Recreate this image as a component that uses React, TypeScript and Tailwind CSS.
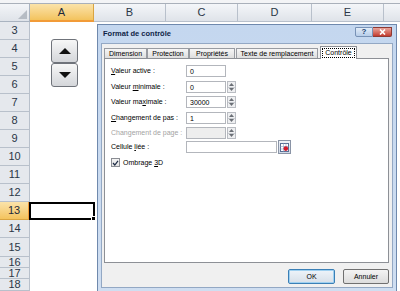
import React from 'react';

const cols = [
  { name: 'A', w: 64, active: true },
  { name: 'B', w: 72 },
  { name: 'C', w: 72 },
  { name: 'D', w: 74 },
  { name: 'E', w: 72 },
  { name: '', w: 20 },
];

const rows = [
  { n: 3, h: 18 },
  { n: 4, h: 18 },
  { n: 5, h: 18 },
  { n: 6, h: 18 },
  { n: 7, h: 18 },
  { n: 8, h: 18 },
  { n: 9, h: 18 },
  { n: 10, h: 18 },
  { n: 11, h: 18 },
  { n: 12, h: 18 },
  { n: 13, h: 18, active: true },
  { n: 14, h: 18 },
  { n: 15, h: 19 },
  { n: 16, h: 11 },
  { n: 17, h: 11 },
  { n: 18, h: 12 },
];

function Spin() {
  return (
    <div className="ml-px flex h-[12px] w-[9px] flex-col border border-[#b9bcc2] bg-[#eeeff1]">
      <div className="flex flex-1 items-center justify-center border-b border-[#c9ccd1]">
        <svg width="5" height="3" viewBox="0 0 5 3">
          <path d="M0 3 L2.5 0 L5 3 Z" fill="#6b6f76" />
        </svg>
      </div>
      <div className="flex flex-1 items-center justify-center">
        <svg width="5" height="3" viewBox="0 0 5 3">
          <path d="M0 0 L2.5 3 L5 0 Z" fill="#6b6f76" />
        </svg>
      </div>
    </div>
  );
}

function Field({
  label,
  value,
  spin,
  disabled,
  h,
}: {
  label: React.ReactNode;
  value?: string;
  spin?: boolean;
  disabled?: boolean;
  h: string;
}) {
  return (
    <div className={`flex items-start ${h}`}>
      <div
        className={`w-[75px] pt-[2px] leading-[8px] ${disabled ? 'text-[#a3a3a3]' : 'text-black'}`}
      >
        {label}
      </div>
      <div
        className={`flex h-[12px] w-[40px] items-center border border-[#b3b6bc] pl-[3px] leading-none ${
          disabled ? 'bg-[#eeeeee]' : 'bg-white'
        }`}
      >
        {value}
      </div>
      {spin && <Spin />}
    </div>
  );
}

function Tab({ label, w, active }: { label: string; w: string; active?: boolean }) {
  if (active) {
    return (
      <div
        className={`relative z-10 -mb-px flex h-[13px] ${w} items-center justify-center border border-b-0 border-[#8d9096] bg-white`}
      >
        <span className="border border-dotted border-black px-[2px] leading-[8px]">{label}</span>
      </div>
    );
  }
  return (
    <div
      className={`flex h-[10px] ${w} items-center justify-center border border-b-0 border-[#989ba1] bg-gradient-to-b from-[#f6f6f6] to-[#dedede] leading-none`}
    >
      {label}
    </div>
  );
}

export default function App() {
  return (
    <div className="relative h-[291px] w-[400px] overflow-hidden bg-white font-['Liberation_Sans',Arial,sans-serif]">
      {/* formula bar edge */}
      <div className="h-[4px] border-b border-[#a9b0ba] bg-[#f3f4f6]" />

      {/* column headers */}
      <div className="flex h-[18px]">
        <div className="relative w-[30px] shrink-0 border-r border-b border-[#a9b3c0] bg-gradient-to-b from-[#f3f5f8] to-[#dfe3e9]">
          <svg className="absolute right-[2px] bottom-[2px]" width="9" height="9" viewBox="0 0 9 9">
            <path d="M9 0 L9 9 L0 9 Z" fill="#b6bcc4" />
          </svg>
        </div>
        {cols.map((c) => (
          <div
            key={c.name + c.w}
            style={{ width: c.w }}
            className={`flex shrink-0 items-center justify-center border-r text-[11px] leading-none ${
              c.active
                ? 'border-b-2 border-r-[#d9a441] border-b-[#f29b38] bg-gradient-to-b from-[#fbe3a9] to-[#f3c35c] text-[#1d2a3a]'
                : 'border-b border-[#b8c0cb] bg-gradient-to-b from-[#f4f6f9] to-[#dfe3e9] text-[#2a3646]'
            }`}
          >
            {c.name}
          </div>
        ))}
      </div>

      {/* rows */}
      {rows.map((r) => (
        <div key={r.n} className="flex" style={{ height: r.h }}>
          <div
            className={`flex w-[30px] shrink-0 items-center justify-center overflow-hidden border-r border-b text-[11px] leading-none ${
              r.active
                ? 'border-r-2 border-b-[#d9a441] border-r-[#f29b38] bg-gradient-to-b from-[#fbe3a9] to-[#f3c35c] text-[#1d2a3a]'
                : 'border-[#b8c0cb] bg-[#e5e8ed] text-[#2a3646]'
            }`}
          >
            {r.n}
          </div>
          <div
            className={`relative w-[64px] shrink-0 ${r.active ? 'z-10 -ml-px w-[66px] border-2 border-black' : ''}`}
          >
            {r.active && (
              <div className="absolute -right-[3px] -bottom-[3px] h-[5px] w-[5px] border border-white bg-black" />
            )}
          </div>
          <div className="flex-1" />
        </div>
      ))}

      {/* spin button form control on the sheet */}
      <div className="absolute top-[39px] left-[51px] flex w-[27px] flex-col">
        <div className="flex h-[24px] items-center justify-center rounded-[3px] border border-[#6f737a] bg-gradient-to-b from-[#f7f7f7] to-[#d4d6da]">
          <svg width="12" height="6" viewBox="0 0 12 6">
            <path d="M0 6 L6 0 L12 6 Z" fill="#111" />
          </svg>
        </div>
        <div className="flex h-[24px] items-center justify-center rounded-[3px] border border-[#6f737a] bg-gradient-to-b from-[#f7f7f7] to-[#d4d6da]">
          <svg width="12" height="6" viewBox="0 0 12 6">
            <path d="M0 0 L6 6 L12 0 Z" fill="#111" />
          </svg>
        </div>
      </div>

      {/* dialog window */}
      <div className="absolute top-[24px] left-[97px] flex h-[268px] w-[300px] flex-col border border-[#6f89ad] bg-gradient-to-b from-[#c4d7ef] to-[#cfdef1] px-[3px] pb-[3px] text-[7px] text-black">
        <div className="flex h-[18px] items-start justify-between">
          <div className="pt-[5px] pl-[2px] text-[7.5px] leading-none font-bold text-[#0f2346]">
            Format de contrôle
          </div>
          <div className="flex pt-[2px] pr-px">
            <div className="flex h-[10px] w-[18px] items-center justify-center rounded-bl-[2px] border border-[#7892b6] bg-gradient-to-b from-[#e2ecf8] to-[#b7cde8] text-[8px] leading-none font-bold text-[#23406e]">
              ?
            </div>
            <div className="flex h-[10px] w-[19px] items-center justify-center rounded-br-[2px] border border-l-0 border-[#8e3a33] bg-gradient-to-b from-[#e8a39b] to-[#c2392f]">
              <svg width="7" height="6" viewBox="0 0 7 6">
                <path d="M1 0.5 L6 5.5 M6 0.5 L1 5.5" stroke="#fff" strokeWidth="1.6" />
              </svg>
            </div>
          </div>
        </div>

        <div className="flex flex-1 flex-col border border-[#93a8c4] bg-[#f0f0f0] pt-[2px] pr-[3px] pl-[2px]">
          <div className="flex h-[12px] items-end">
            <Tab label="Dimension" w="w-[43px]" />
            <Tab label="Protection" w="w-[42px]" />
            <Tab label="Propriétés" w="w-[46px]" />
            <div className="w-px" />
            <Tab label="Texte de remplacement" w="w-[82px]" />
            <div className="w-[2px]" />
            <Tab label="Contrôle" w="w-[37px]" active />
          </div>

          <div className="flex h-[205px] flex-col border border-[#8d9096] bg-white pt-[6px] pl-[6px]">
            <Field
              h="h-[16px]"
              label={
                <>
                  <u>V</u>aleur active :
                </>
              }
              value="0"
            />
            <Field
              h="h-[15px]"
              label={
                <>
                  Valeur <u>m</u>inimale :
                </>
              }
              value="0"
              spin
            />
            <Field
              h="h-[16px]"
              label={
                <>
                  Valeur ma<u>x</u>imale :
                </>
              }
              value="30000"
              spin
            />
            <Field
              h="h-[15px]"
              label={
                <>
                  <u>C</u>hangement de pas :
                </>
              }
              value="1"
              spin
            />
            <Field h="h-[14px]" label="Changement de page :" spin disabled />
            <div className="flex h-[14px] items-start">
              <div className="w-[75px] pt-[2px] leading-[8px]">
                Cellule <u>l</u>iée :
              </div>
              <div className="h-[12px] w-[91px] border border-[#b3b6bc] bg-white" />
              <div className="-mt-[1px] ml-px flex h-[14px] w-[13px] items-center justify-center border border-[#8a94a6] bg-gradient-to-b from-[#eef2f8] to-[#cfd8e6]">
                <svg width="9" height="9" viewBox="0 0 9 9">
                  <rect x="0.5" y="0.5" width="8" height="8" fill="#fff" stroke="#5a6f95" />
                  <path d="M0.5 3.5 H8.5 M0.5 6 H8.5 M3.5 0.5 V8.5 M6 0.5 V8.5" stroke="#8ea3c6" strokeWidth="0.6" />
                  <circle cx="5.8" cy="5.6" r="2.3" fill="#d3192b" />
                </svg>
              </div>
            </div>
            <div className="mt-[3px] flex items-center">
              <div className="flex h-[9px] w-[9px] items-center justify-center border border-[#8a8d93] bg-gradient-to-b from-[#f4f4f4] to-[#e3e3e3]">
                <svg width="7" height="6" viewBox="0 0 7 6">
                  <path d="M1 3 L2.8 5 L6 0.8" stroke="#1c2a44" strokeWidth="1.2" fill="none" />
                </svg>
              </div>
              <span className="ml-[3px] leading-none">
                Ombrage <u>3</u>D
              </span>
            </div>
          </div>

          <div className="flex flex-1 items-start justify-end gap-[8px] pt-[6px]">
            <div className="flex h-[15px] w-[47px] items-center justify-center rounded-[2px] border border-[#3a7fb6] bg-gradient-to-b from-[#eef4fa] to-[#d7dfe8] leading-none shadow-[inset_0_0_0_1px_#9fd0f0]">
              OK
            </div>
            <div className="flex h-[15px] w-[46px] items-center justify-center rounded-[2px] border border-[#707070] bg-gradient-to-b from-[#f4f4f4] to-[#dcdcdc] leading-none">
              Annuler
            </div>
          </div>
        </div>
      </div>
    </div>
  );
}
